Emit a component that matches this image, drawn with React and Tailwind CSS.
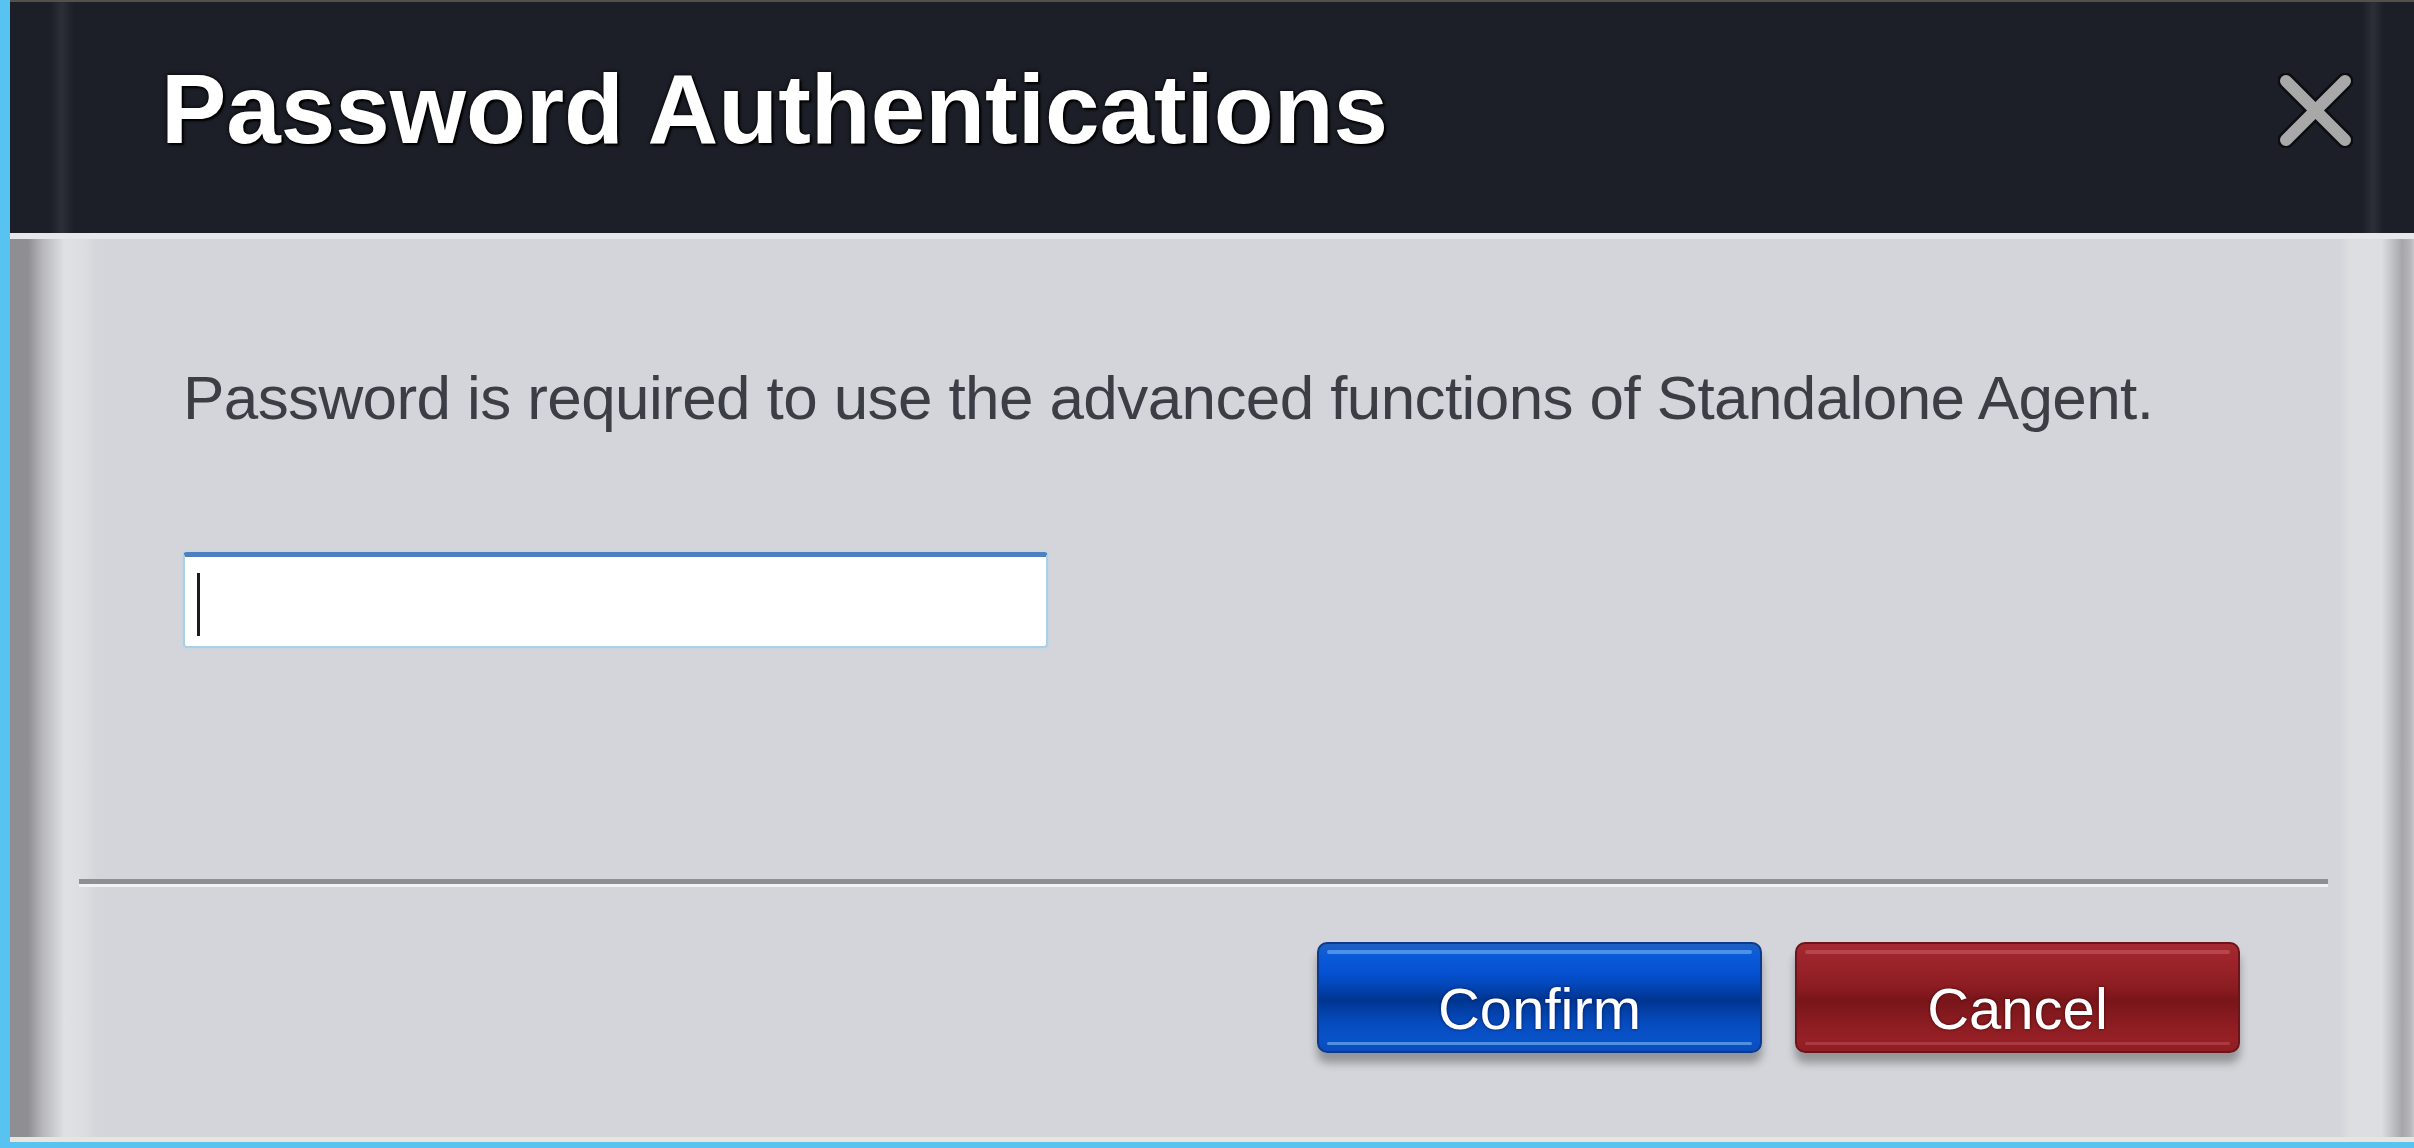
import React from "react";

const CloseIcon = () => (
  <svg width="75" height="75" viewBox="0 0 75 75" className="mt-[71px] shrink-0">
    <g strokeLinecap="round">
      <line x1="8" y1="8" x2="67" y2="67" stroke="#0c0d10" strokeWidth="17" />
      <line x1="67" y1="8" x2="8" y2="67" stroke="#0c0d10" strokeWidth="17" />
      <line x1="8" y1="8" x2="67" y2="67" stroke="#a8a8a8" strokeWidth="12" />
      <line x1="67" y1="8" x2="8" y2="67" stroke="#a8a8a8" strokeWidth="12" />
    </g>
  </svg>
);

const buttons = [
  {
    label: "Confirm",
    className:
      "border-[#0b3b8e] bg-[linear-gradient(to_bottom,#1f5fc0_0px,#0a5ad8_12px,#0552d4_28px,#0343b0_44px,#00358f_56px,#033fa6_66px,#064cbf_80px,#0952c8_95px,#0a4cbc_107px)] [text-shadow:0_0_3px_rgba(0,20,90,0.95)]",
    line: "bg-[#4a92ea]",
    lineBottom: "bg-[#4f90e0]",
  },
  {
    label: "Cancel",
    className:
      "border-[#6e1418] bg-[linear-gradient(to_bottom,#a32a30_0px,#9e252b_12px,#962127_28px,#8a1c21_44px,#78161a_56px,#82191e_68px,#8e1d22_82px,#952025_96px,#8e1e23_107px)] [text-shadow:0_0_3px_rgba(60,0,0,0.95)]",
    line: "bg-[#b6464c]",
    lineBottom: "bg-[#a83a40]",
  },
];

const DialogButton = ({ item }) => {
  return (
    <button
      type="button"
      className={
        "relative w-[445px] h-[111px] rounded-[10px] border-2 shadow-[0_10px_8px_rgba(0,0,0,0.3)] text-white text-[58px] leading-[58px] flex items-center justify-center pt-[22px] " +
        item.className
      }
    >
      <span className={"absolute top-[6px] left-[8px] right-[8px] h-[4px] rounded-full " + item.line} />
      <span className={"absolute bottom-[6px] left-[8px] right-[8px] h-[3px] rounded-full " + item.lineBottom} />
      <span className="relative">{item.label}</span>
    </button>
  );
};

const App = () => {
  return (
    <div className="w-[2414px] h-[1148px] flex bg-[#58c2f0] pl-[10px] pb-[6px] overflow-hidden font-['Liberation_Sans',Arial,sans-serif]">
      <div className="flex-1 flex flex-col">
        {/* title bar */}
        <div className="h-[233px] shrink-0 border-t-2 border-[#55504c] flex justify-between pl-[151px] pr-[61px] bg-[linear-gradient(to_right,#1c1f27_40px,#2c2f37_52px,#1c1f27_64px,#1c1f27_2352px,#2c2f37_2363px,#1c1f27_2374px)]">
          <h1 className="mt-[58px] text-[98px] leading-[98px] font-bold text-white [text-shadow:0_0_4px_#000,2px_2px_2px_#000]">
            Password Authentications
          </h1>
          <CloseIcon />
        </div>

        {/* body */}
        <div className="flex-1 flex flex-col border-t-[6px] border-t-[#e6e7ea] border-b-[5px] border-b-[#e7e5de] bg-[linear-gradient(to_right,#8e8e93_0px,#8e8e93_18px,#b6b6ba_32px,#e0e1e4_55px,#dcdde1_75px,#d3d5da_88px,#d3d5da_2330px,#dddee1_2340px,#dddee1_2372px,#a7a7ab_2392px,#b5b5b9_2400px,#c8c8cc_2404px)]">
          <p className="mt-[128px] ml-[173px] text-[62px] leading-[62px] tracking-[-0.6px] text-[#3c3e46]">
            Password is required to use the advanced functions of Standalone Agent.
          </p>

          <div className="mt-[123px] ml-[173px] w-[865px] h-[96px] bg-white rounded-[4px] border-2 border-[#a9d0e8] border-t-[5px] border-t-[#4d7fc2] shadow-[0_0_3px_#b8d8ec] pl-[12px] pt-[16px]">
            <span className="block w-[3px] h-[63px] bg-[#1b1b1b]" />
          </div>

          <div className="mt-[231px] ml-[69px] mr-[86px] border-t-[5px] border-t-[#8e8f94] border-b-[3px] border-b-[#f1f2f4]" />

          <div className="mt-[55px] mr-[174px] flex justify-end gap-[33px]">
            {buttons.map((item, key) => (
              <DialogButton key={key} item={item} />
            ))}
          </div>
        </div>
      </div>
    </div>
  );
};

export default App;
